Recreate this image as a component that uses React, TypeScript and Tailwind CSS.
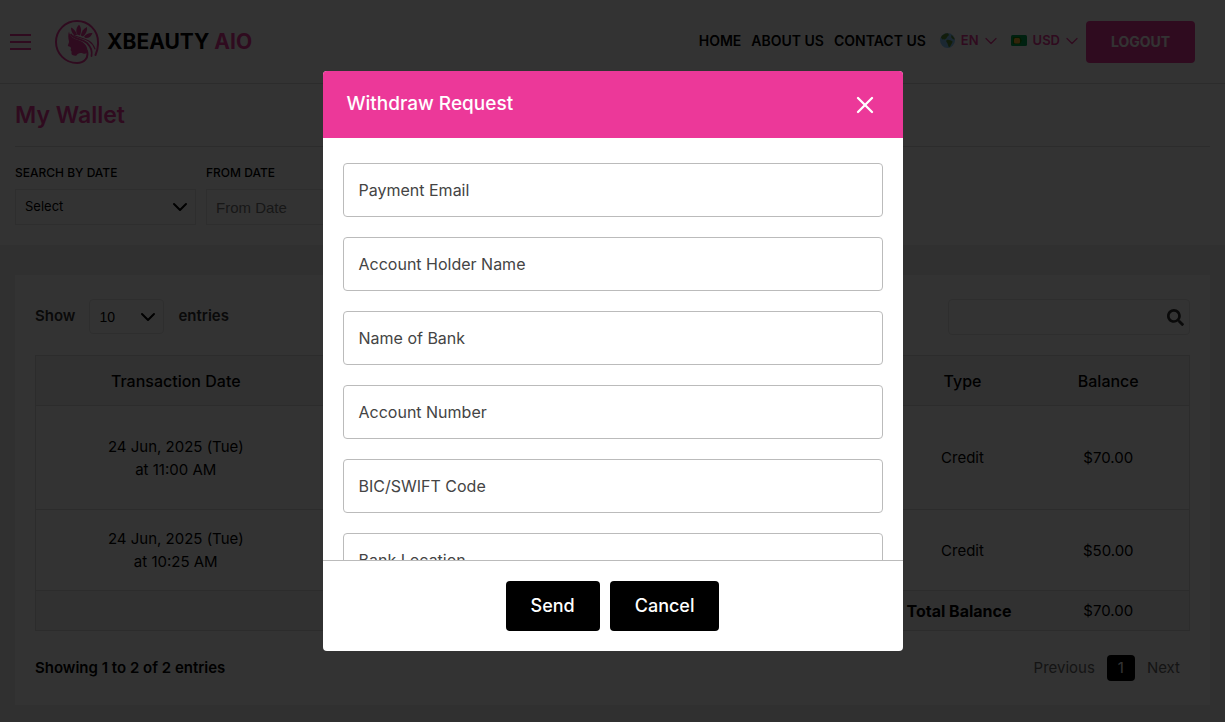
import React from 'react';
import { ChevronDown, X } from 'lucide-react';
import { FaSearch } from 'react-icons/fa';

const navLinks = ['HOME', 'ABOUT US', 'CONTACT US'];

const transactions = [
  { date: '24 Jun, 2025 (Tue)', time: 'at 11:00 AM', type: 'Credit', balance: '$70.00', height: 'h-[104px]' },
  { date: '24 Jun, 2025 (Tue)', time: 'at 10:25 AM', type: 'Credit', balance: '$50.00', height: 'h-[81px]' },
];

const withdrawFields = [
  { id: 'payment-email', label: 'Payment Email', type: 'email' },
  { id: 'account-holder', label: 'Account Holder Name', type: 'text' },
  { id: 'bank-name', label: 'Name of Bank', type: 'text' },
  { id: 'account-number', label: 'Account Number', type: 'text' },
  { id: 'swift-code', label: 'BIC/SWIFT Code', type: 'text' },
  { id: 'bank-location', label: 'Bank Location', type: 'text' },
];

const LogoMark = () => (
  <svg className="w-11 h-11 flex-shrink-0" viewBox="0 0 44 44" fill="none" aria-hidden="true">
    <path
      d="M40.5 35 C42.300 31 43.200 27 43 22 A21 21 0 1 0 22 43 C29 43 34 38 32 31"
      stroke="#ec3899"
      strokeWidth="2"
      strokeLinecap="round"
    />
    <path
      d="M14 11.500 C15 17 19 19 23 20 C28 21.500 32 25 32.500 30 C32.800 33 31 34.500 28 33.500 C25 32.500 22.500 33.500 21.500 35.500 C20 36 17 35.500 16.500 34 L16.500 31.500 L15.500 30 L16 28.500 L15.500 27 L12.800 26 C13 24.500 14 23 14 21.500 C13 18 13 14 14 11.500 Z"
      fill="#ec3899"
    />
    <path d="M16 14.500 C19 19.500 27 18.500 32 23 C36 27 37.500 31 36.500 36" stroke="#ec3899" strokeWidth="1.8" strokeLinecap="round" />
    <path d="M19 15.500 C26 19 36 18 40 29" stroke="#ec3899" strokeWidth="1.2" strokeLinecap="round" />
    <g fill="#ec3899">
      <path d="M19 15 C16.500 12.500 16 10 16 7.500 C18.500 8.500 21 11 22 15 Z" />
      <path d="M22 14.500 C20.500 10.500 21.500 7 24 4.800 C26.500 7.500 26.500 11.500 25 15.500 Z" />
      <path d="M25.800 15.500 C26.500 11.500 28.500 8.500 32 7 C32.500 11 31 14 28 16.500 Z" />
      <path d="M29 16.800 C31 14 34 12.500 37.500 13 C36.500 16.500 33.500 18.500 30.500 18 Z" />
    </g>
  </svg>
);

const GlobeIcon = () => (
  <svg className="w-[15px] h-[15px]" viewBox="0 0 16 16" aria-hidden="true">
    <circle cx="8" cy="8" r="8" fill="#88c9f9" />
    <path d="M1 4.500 C2.500 2 5 0.500 8 0.300 C9.500 1 10 2 9 3 C8 4 7.500 4 7 5.500 C5.500 6 6 7 4.500 7 C3 6.500 2 7 1 4.500 Z" fill="#5c913b" />
    <path d="M7 7.500 C9 6.500 11 7.500 13.500 9 C13 11 12 12 11 14 L9.500 15.500 C8.500 13.500 8.500 12 7.500 10.500 C6.500 9.500 6.500 8.500 7 7.500 Z" fill="#5c913b" />
    <path d="M12 2 C14 3 15.500 5.500 15.700 7 C14.500 7 13 6 12 4.500 Z" fill="#5c913b" />
  </svg>
);

const FlagIcon = () => (
  <svg className="w-4 h-[11px]" viewBox="0 0 16 11" aria-hidden="true">
    <rect width="16" height="11" rx="1.500" fill="#00a651" />
    <path d="M2 2 H9 L11 5.500 L9 9 H2 Z" fill="#128807" />
    <rect x="3" y="3" width="6" height="5.500" rx="1.500" fill="#ffb636" />
  </svg>
);

const SiteHeader = () => (
  <header className="h-[84px] flex items-center justify-between pl-2.5 pr-[30px] border-b border-[#ddd] bg-white">
    <div className="flex items-center">
      <button type="button" aria-label="Open menu" className="flex flex-col gap-[5px] w-[21px]">
        <span className="h-0.5 bg-[#ec3899]" />
        <span className="h-0.5 bg-[#ec3899]" />
        <span className="h-0.5 bg-[#ec3899]" />
      </button>
      <a href="#" className="flex items-center gap-2 ml-6 text-[21px] font-bold text-black whitespace-nowrap">
        <LogoMark />
        <span>
          XBEAUTY <span className="text-[#ec3899]">AIO</span>
        </span>
      </a>
    </div>

    <div className="flex items-center">
      <nav className="flex gap-2.5 pb-0.5 text-sm font-semibold text-black whitespace-nowrap">
        {navLinks.map((link) => (
          <a key={link} href="#">{link}</a>
        ))}
      </nav>
      <button type="button" className="flex items-center ml-3.5 pb-0.5 text-[13px] font-semibold text-[#ec3899]">
        <GlobeIcon />
        <span className="ml-1.5 mr-0.5">EN</span>
        <ChevronDown className="w-5 h-5" strokeWidth={1.5} aria-hidden="true" />
      </button>
      <button type="button" className="flex items-center ml-2.5 pb-0.5 text-[13px] font-semibold text-[#ec3899]">
        <FlagIcon />
        <span className="ml-1.5 mr-0.5">USD</span>
        <ChevronDown className="w-5 h-5" strokeWidth={1.5} aria-hidden="true" />
      </button>
      <button type="button" className="w-[109px] h-[42px] ml-1 rounded bg-[#ec3899] text-sm font-bold text-white">
        LOGOUT
      </button>
    </div>
  </header>
);

const WalletFilters = () => (
  <section className="px-[15px] pb-5 bg-white">
    <h1 className="h-[63px] flex items-center border-b border-[#ddd] text-[23px] font-semibold text-[#ec3899]">
      My Wallet
    </h1>
    <form className="flex gap-2.5 pt-4">
      <div className="w-[181px]">
        <label htmlFor="search-by" className="block text-xs leading-5 font-medium text-black">SEARCH BY DATE</label>
        <div className="relative mt-1.5">
          <select id="search-by" className="appearance-none w-full h-9 px-[9px] border border-[#e5e5e5] text-[13px] text-black">
            <option>Select</option>
          </select>
          <ChevronDown className="absolute right-1 top-1.5 w-6 h-6 text-black pointer-events-none" aria-hidden="true" />
        </div>
      </div>
      <div className="w-[181px]">
        <label htmlFor="from-date" className="block text-xs leading-5 font-medium text-black">FROM DATE</label>
        <input
          id="from-date"
          type="text"
          placeholder="From Date"
          className="w-full h-9 mt-1.5 px-[9px] border border-[#e5e5e5] font-['Liberation_Sans',sans-serif] text-[15px] placeholder:text-[#757575]"
        />
      </div>
    </form>
  </section>
);

const TransactionsCard = () => (
  <section className="mx-[15px] mt-[30px] mb-[15px] px-5 pt-6 pb-6 bg-white">
    <div className="flex items-start justify-between">
      <div className="flex items-center gap-3.5 text-[15px] font-semibold text-[#333]">
        <label htmlFor="page-size">Show</label>
        <div className="relative">
          <select
            id="page-size"
            className="appearance-none w-[75px] h-[35px] px-[9px] border border-[#e5e5e5] rounded font-['Liberation_Sans',sans-serif] text-sm font-normal text-black"
          >
            <option>10</option>
          </select>
          <ChevronDown className="absolute right-1 top-1.5 w-6 h-6 text-black pointer-events-none" aria-hidden="true" />
        </div>
        <span>entries</span>
      </div>
      <div className="relative">
        <input
          type="search"
          aria-label="Search transactions"
          className="w-[242px] h-9 pl-2.5 pr-9 border border-[#e5e5e5] rounded"
        />
        <FaSearch className="absolute right-1.5 top-2.5 w-[17px] h-[17px] text-[#333]" aria-hidden="true" />
      </div>
    </div>

    <table className="w-full mt-5 table-fixed border-collapse border border-[#ddd] text-center text-[15px] leading-[23px] text-black">
      <colgroup>
        <col className="w-[280px]" />
        <col />
        <col className="w-[130px]" />
        <col className="w-[162px]" />
      </colgroup>
      <thead className="bg-[#f5f5f5] text-base">
        <tr className="h-[50px] border-b border-[#ddd]">
          <th className="font-medium">Transaction Date</th>
          <td />
          <th className="font-medium">Type</th>
          <th className="font-medium">Balance</th>
        </tr>
      </thead>
      <tbody>
        {transactions.map((row) => (
          <tr key={row.time} className={`${row.height} border-b border-[#ddd]`}>
            <td>
              {row.date}
              <br />
              {row.time}
            </td>
            <td />
            <td>{row.type}</td>
            <td>{row.balance}</td>
          </tr>
        ))}
      </tbody>
      <tfoot className="bg-[#f5f5f5]">
        <tr className="h-10">
          <th colSpan={3} className="pr-4 text-right text-base font-bold">Total Balance</th>
          <td>{transactions[0].balance}</td>
        </tr>
      </tfoot>
    </table>

    <div className="flex items-center justify-between mt-6 text-[15px]">
      <p className="font-semibold text-black">Showing 1 to 2 of 2 entries</p>
      <div className="flex items-center gap-3 pr-2.5 text-[#666]">
        <button type="button">Previous</button>
        <button type="button" className="w-7 h-[26px] rounded-sm bg-black text-white">1</button>
        <button type="button">Next</button>
      </div>
    </div>
  </section>
);

const WithdrawModal = () => (
  <div className="fixed inset-0 flex items-center justify-center bg-black/80">
    <div
      role="dialog"
      aria-modal="true"
      aria-labelledby="withdraw-title"
      className="flex flex-col w-[580px] max-w-full h-[580px] max-h-full rounded overflow-hidden bg-white"
    >
      <div className="flex items-center justify-between h-[67px] flex-shrink-0 px-6 bg-[#ec3899] text-white">
        <h2 id="withdraw-title" className="text-[19px] font-medium">Withdraw Request</h2>
        <button type="button" aria-label="Close">
          <X className="w-7 h-7" aria-hidden="true" />
        </button>
      </div>

      <form id="withdraw-form" className="flex-1 min-h-0 flex flex-col gap-5 px-5 pt-[25px] overflow-y-auto [scrollbar-width:none]">
        {withdrawFields.map((field) => (
          <div key={field.id} className="relative flex-shrink-0">
            <input
              id={field.id}
              type={field.type}
              className="block w-full h-[54px] px-[15px] border border-[#bbb] rounded text-base"
            />
            <label htmlFor={field.id} className="absolute left-4 top-4 text-base leading-[22px] text-[#444] pointer-events-none">
              {field.label}
            </label>
          </div>
        ))}
      </form>

      <div className="flex justify-center gap-2.5 flex-shrink-0 py-5 border-t border-[#bbb]">
        <button type="submit" form="withdraw-form" className="h-[50px] px-[25px] rounded bg-black text-lg font-medium text-white">
          Send
        </button>
        <button type="button" className="h-[50px] px-[25px] rounded bg-black text-lg font-medium text-white">
          Cancel
        </button>
      </div>
    </div>
  </div>
);

const App: React.FC = () => {
  return (
    <div className="min-h-screen bg-[#f0f0f0] font-[Inter,sans-serif]">
      <SiteHeader />
      <main className="flow-root">
        <WalletFilters />
        <TransactionsCard />
      </main>
      <WithdrawModal />
    </div>
  );
};

export default App;
